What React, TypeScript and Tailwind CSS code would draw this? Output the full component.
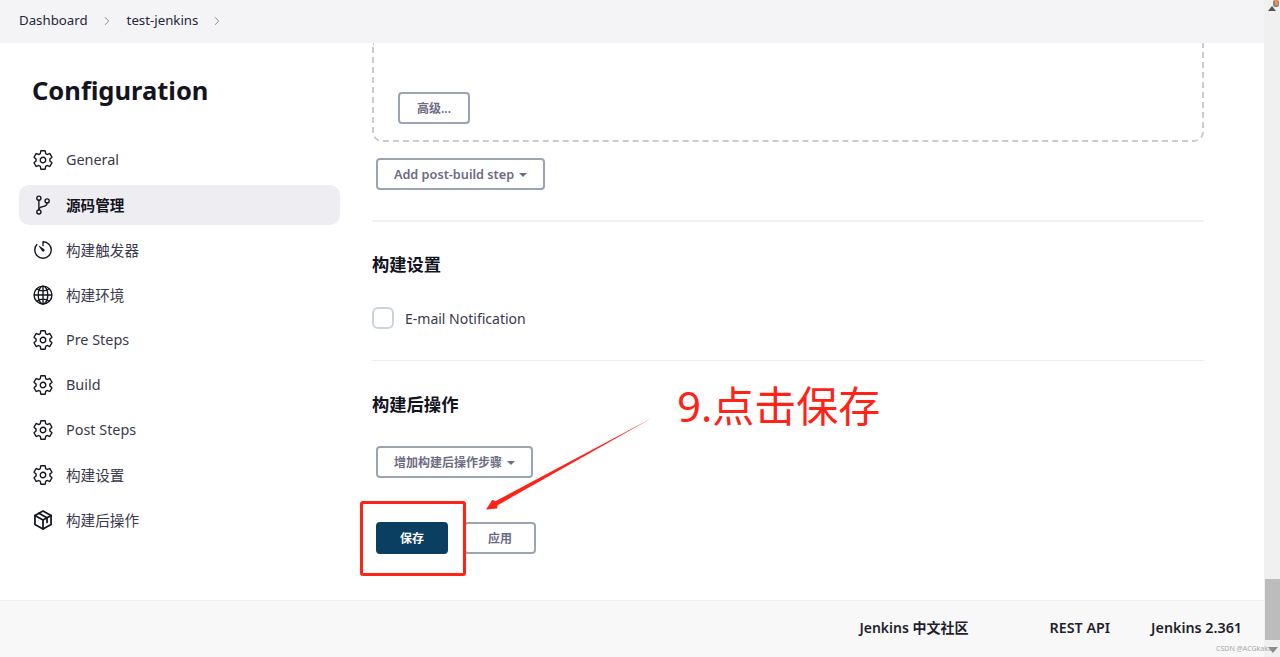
import {
  IoGitBranchOutline,
  IoGlobeOutline,
  IoSettingsOutline,
  IoTimerOutline,
} from 'react-icons/io5';
import { ChevronRight } from 'lucide-react';
import type { ComponentType } from 'react';

function CubeIcon({ className }: { className?: string }) {
  return (
    <svg className={className} viewBox="0 0 24 24" fill="none" stroke="currentColor" strokeWidth="1.9" strokeLinejoin="round" strokeLinecap="round">
      <path d="M12 2.2 L20.8 7 V17 L12 21.8 L3.2 17 V7 Z" />
      <path d="M3.2 7 L12 12 L20.8 7 M12 12 V21.8" />
      <path d="M7.4 4.6 L16.4 9.6 V14.6" />
    </svg>
  );
}

const navItems: { label: string; icon: ComponentType<{ className?: string }>; active?: boolean; cjk?: boolean }[] = [
  { label: 'General', icon: IoSettingsOutline },
  { label: '源码管理', icon: IoGitBranchOutline, active: true, cjk: true },
  { label: '构建触发器', icon: IoTimerOutline, cjk: true },
  { label: '构建环境', icon: IoGlobeOutline, cjk: true },
  { label: 'Pre Steps', icon: IoSettingsOutline },
  { label: 'Build', icon: IoSettingsOutline },
  { label: 'Post Steps', icon: IoSettingsOutline },
  { label: '构建设置', icon: IoSettingsOutline, cjk: true },
  { label: '构建后操作', icon: CubeIcon, cjk: true },
];

function Caret() {
  return <span className="ml-[5px] inline-block w-0 h-0 border-x-[4px] border-x-transparent border-t-[4px] border-t-[#6d6b85]" />;
}

function OutlineButton({ children, className }: { children: React.ReactNode; className: string }) {
  return (
    <button className={`flex items-center justify-center h-8 pt-[2px] rounded-[4px] border-2 border-[#9aa5b1] bg-white font-semibold text-[#6d6b85] ${className}`}>
      {children}
    </button>
  );
}

export default function App() {
  return (
    <div className="relative flex h-[657px] overflow-hidden bg-white text-[#14141f] font-['Noto_Sans','Noto_Sans_CJK_SC',sans-serif]">
      <div className="flex flex-col flex-1 min-w-0">
        <header className="flex items-center h-[43px] shrink-0 pl-[19px] pb-[1px] bg-[#f4f4f6] text-[13.25px] text-[#26263a]">
          <span>Dashboard</span>
          <ChevronRight className="ml-[12px] w-[14px] h-[14px] text-[#77778a]" strokeWidth={1.5} />
          <span className="ml-[13px]">test-jenkins</span>
          <ChevronRight className="ml-[12px] w-[14px] h-[14px] text-[#77778a]" strokeWidth={1.5} />
        </header>

        <div className="flex flex-1 min-h-0">
          <aside className="w-[372px] shrink-0 pl-[19px]">
            <h1 className="mt-[27px] ml-[13px] h-[40px] text-[25.5px] leading-[40px] font-bold">Configuration</h1>
            <nav className="mt-[30px] flex flex-col gap-[5px] w-[321px]">
              {navItems.map((item) => (
                <div
                  key={item.label}
                  className={`flex items-center h-10 pl-[13px] rounded-[10px] ${item.cjk ? 'text-[14.6px]' : 'text-[14.4px]'} ${item.active ? 'bg-[#eeeef2] font-bold' : 'text-[#3a3a4c]'}`}
                >
                  <item.icon className="w-[22px] h-[22px] text-[#14141f]" />
                  <span className={`ml-[12px] ${item.cjk ? 'mt-[1px]' : '-mt-[1px]'}`}>{item.label}</span>
                </div>
              ))}
            </nav>
          </aside>

          <main className="w-[832px] shrink-0">
            <div className="h-[99px] rounded-b-[10px] border-2 border-t-0 border-dashed border-[#c5ccd2] pt-[49px] pl-[24px]">
              <OutlineButton className="w-[72px] text-[12px]">高级...</OutlineButton>
            </div>
            <div className="mt-[16px] pl-[4px]">
              <OutlineButton className="w-[169px] text-[12.7px]">Add post-build step<Caret /></OutlineButton>
            </div>
            <div className="mt-[30px] h-[2px] bg-[#f2f2f4]" />
            <h2 className="mt-[31px] h-6 text-[17.3px] leading-6 font-bold">构建设置</h2>
            <label className="mt-[30px] flex items-center h-[22px] text-[14px] text-[#3a3a4c]">
              <span className="w-[22px] h-[22px] rounded-[6px] border-2 border-[#ccd4da]" />
              <span className="ml-[11px]">E-mail Notification</span>
            </label>
            <div className="mt-[31px] h-[1px] bg-[#eeeef0]" />
            <h2 className="mt-[32px] h-6 text-[17.3px] leading-6 font-bold">构建后操作</h2>
            <div className="mt-[29px] pl-[4px]">
              <OutlineButton className="w-[157px] text-[12px]">增加构建后操作步骤<Caret /></OutlineButton>
            </div>
            <div className="mt-[44px] pl-[4px] flex gap-[16px]">
              <button className="h-8 w-[72px] pt-[2px] rounded-[4px] bg-[#0b3f62] text-[12px] font-bold text-white">保存</button>
              <OutlineButton className="w-[72px] text-[12px]">应用</OutlineButton>
            </div>
          </main>
        </div>

        <footer className="flex items-center justify-end h-[57px] shrink-0 pr-[22px] pb-[3px] gap-[41px] bg-[#f8f8f8] border-t border-[#f0f0f2] text-[14.3px] font-semibold text-[#1f1f2e]">
          <span className="mr-[40px] text-[14px]">Jenkins 中文社区</span>
          <span>REST API</span>
          <span>Jenkins 2.361</span>
        </footer>
      </div>

      <div className="flex flex-col w-4 shrink-0 bg-[#f0f0f0]">
        <div className="flex-1" />
        <div className="h-[61px] w-[15px] ml-[1px] bg-[#bcbcbc]" />
        <div className="h-[17px]" />
      </div>

      {/* annotations drawn on top of the screenshot */}
      <div className="absolute left-[360px] top-[501px] w-[106px] h-[75px] rounded-[3px] border-[3px] border-[#ff2317]" />
      <svg className="absolute left-[480px] top-[410px]" width="180" height="105" viewBox="0 0 180 105">
        <polygon points="172,8 17.6,95.2 17.2,98.6 6,99.5 12.4,89.8 15.4,91.2" fill="#ff2317" />
      </svg>
      <div className="absolute left-[677px] top-[376px] text-[42px] leading-[60px] text-[#ff2317] whitespace-nowrap">9.点击保存</div>
      <div className="absolute left-[1216px] top-[644px] text-[7px] leading-[10px] text-[#a8a8a8] whitespace-nowrap">CSDN @ACGkaka</div>
      <div className="absolute left-[1268px] top-[647px] w-0 h-0 border-x-[5px] border-x-transparent border-t-[6px] border-t-[#8c8c8c]" />
      <svg className="absolute left-[1268px] top-0" width="12" height="11" viewBox="0 0 12 11">
        <path d="M0 11 L4 6 L8 11 Z" fill="#555" />
        <rect x="5" y="0" width="6" height="7" rx="2" fill="#888" />
        <rect x="7" y="0" width="3" height="5" fill="#f58a42" />
      </svg>
    </div>
  );
}
